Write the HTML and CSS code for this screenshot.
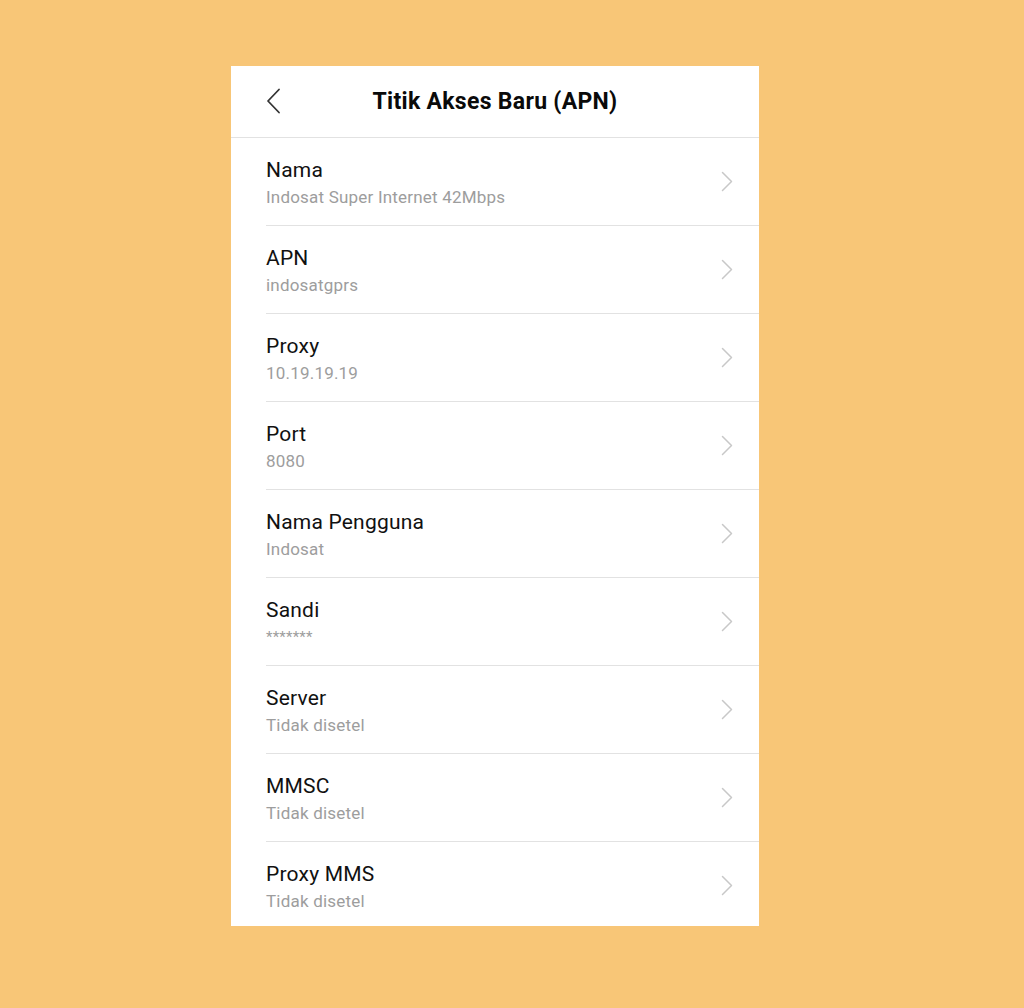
FILE: index.html
```html
<!DOCTYPE html>
<html lang="id">
<head>
<meta charset="utf-8">
<link rel="stylesheet" href="styles.css">
</head>
<body>
<div class="phone">
  <header class="header">
    <svg class="back" width="16" height="26" viewBox="0 0 16 26"><path d="M13 1.5 L2 13 L13 24.5" fill="none" stroke="#333" stroke-width="1.8" stroke-linecap="round" stroke-linejoin="round"/></svg>
    <h1 class="title">Titik Akses Baru (APN)</h1>
  </header>
  <ul class="list">
    <li class="row"><div class="text"><div class="label">Nama</div><div class="value">Indosat Super Internet 42Mbps</div></div><svg class="chev" width="12" height="21" viewBox="0 0 12 21"><path d="M1.5 1.5 L10.5 10.5 L1.5 19.5" fill="none" stroke="#c8c8c8" stroke-width="1.5" stroke-linecap="round" stroke-linejoin="round"/></svg></li>
    <li class="row"><div class="text"><div class="label">APN</div><div class="value">indosatgprs</div></div><svg class="chev" width="12" height="21" viewBox="0 0 12 21"><path d="M1.5 1.5 L10.5 10.5 L1.5 19.5" fill="none" stroke="#c8c8c8" stroke-width="1.5" stroke-linecap="round" stroke-linejoin="round"/></svg></li>
    <li class="row"><div class="text"><div class="label">Proxy</div><div class="value">10.19.19.19</div></div><svg class="chev" width="12" height="21" viewBox="0 0 12 21"><path d="M1.5 1.5 L10.5 10.5 L1.5 19.5" fill="none" stroke="#c8c8c8" stroke-width="1.5" stroke-linecap="round" stroke-linejoin="round"/></svg></li>
    <li class="row"><div class="text"><div class="label">Port</div><div class="value">8080</div></div><svg class="chev" width="12" height="21" viewBox="0 0 12 21"><path d="M1.5 1.5 L10.5 10.5 L1.5 19.5" fill="none" stroke="#c8c8c8" stroke-width="1.5" stroke-linecap="round" stroke-linejoin="round"/></svg></li>
    <li class="row"><div class="text"><div class="label">Nama Pengguna</div><div class="value">Indosat</div></div><svg class="chev" width="12" height="21" viewBox="0 0 12 21"><path d="M1.5 1.5 L10.5 10.5 L1.5 19.5" fill="none" stroke="#c8c8c8" stroke-width="1.5" stroke-linecap="round" stroke-linejoin="round"/></svg></li>
    <li class="row"><div class="text"><div class="label">Sandi</div><div class="value stars">*******</div></div><svg class="chev" width="12" height="21" viewBox="0 0 12 21"><path d="M1.5 1.5 L10.5 10.5 L1.5 19.5" fill="none" stroke="#c8c8c8" stroke-width="1.5" stroke-linecap="round" stroke-linejoin="round"/></svg></li>
    <li class="row"><div class="text"><div class="label">Server</div><div class="value">Tidak disetel</div></div><svg class="chev" width="12" height="21" viewBox="0 0 12 21"><path d="M1.5 1.5 L10.5 10.5 L1.5 19.5" fill="none" stroke="#c8c8c8" stroke-width="1.5" stroke-linecap="round" stroke-linejoin="round"/></svg></li>
    <li class="row"><div class="text"><div class="label">MMSC</div><div class="value">Tidak disetel</div></div><svg class="chev" width="12" height="21" viewBox="0 0 12 21"><path d="M1.5 1.5 L10.5 10.5 L1.5 19.5" fill="none" stroke="#c8c8c8" stroke-width="1.5" stroke-linecap="round" stroke-linejoin="round"/></svg></li>
    <li class="row"><div class="text"><div class="label">Proxy MMS</div><div class="value">Tidak disetel</div></div><svg class="chev" width="12" height="21" viewBox="0 0 12 21"><path d="M1.5 1.5 L10.5 10.5 L1.5 19.5" fill="none" stroke="#c8c8c8" stroke-width="1.5" stroke-linecap="round" stroke-linejoin="round"/></svg></li>
  </ul>
</div>
</body>
</html>
```
FILE: styles.css
```css
html, body {
  margin: 0;
  padding: 0;
  background: #f8c677;
  height: 100%;
}
body {
  font-family: Roboto, "Noto Sans", sans-serif;
  padding-top: 66px;
  padding-left: 231px;
  box-sizing: border-box;
}
.phone {
  width: 528px;
  height: 860px;
  background: #fff;
  overflow: hidden;
}
.header {
  position: relative;
  height: 71px;
  border-bottom: 1px solid #e2e2e2;
  display: flex;
  align-items: center;
  justify-content: center;
}
.back {
  position: absolute;
  left: 35px;
  top: 22px;
}
.title {
  margin: 0;
  font-size: 23px;
  letter-spacing: 0.3px;
  font-weight: 700;
  color: #0a0a0a;
}
.list {
  list-style: none;
  margin: 0;
  padding: 0;
}
.row {
  height: 87px;
  margin-left: 35px;
  border-bottom: 1px solid #e2e2e2;
  display: flex;
  align-items: center;
  justify-content: space-between;
  padding-right: 26px;
}
.text {
  display: flex;
  flex-direction: column;
  gap: 2px;
  padding-top: 2px;
}
.label {
  font-size: 21px;
  letter-spacing: 0.2px;
  line-height: 26px;
  color: #111;
}
.value {
  font-size: 17px;
  letter-spacing: 0.2px;
  line-height: 24px;
  color: #9d9d9d;
}
.stars {
  font-size: 15px;
}
.chev {
  display: block;
}
```
